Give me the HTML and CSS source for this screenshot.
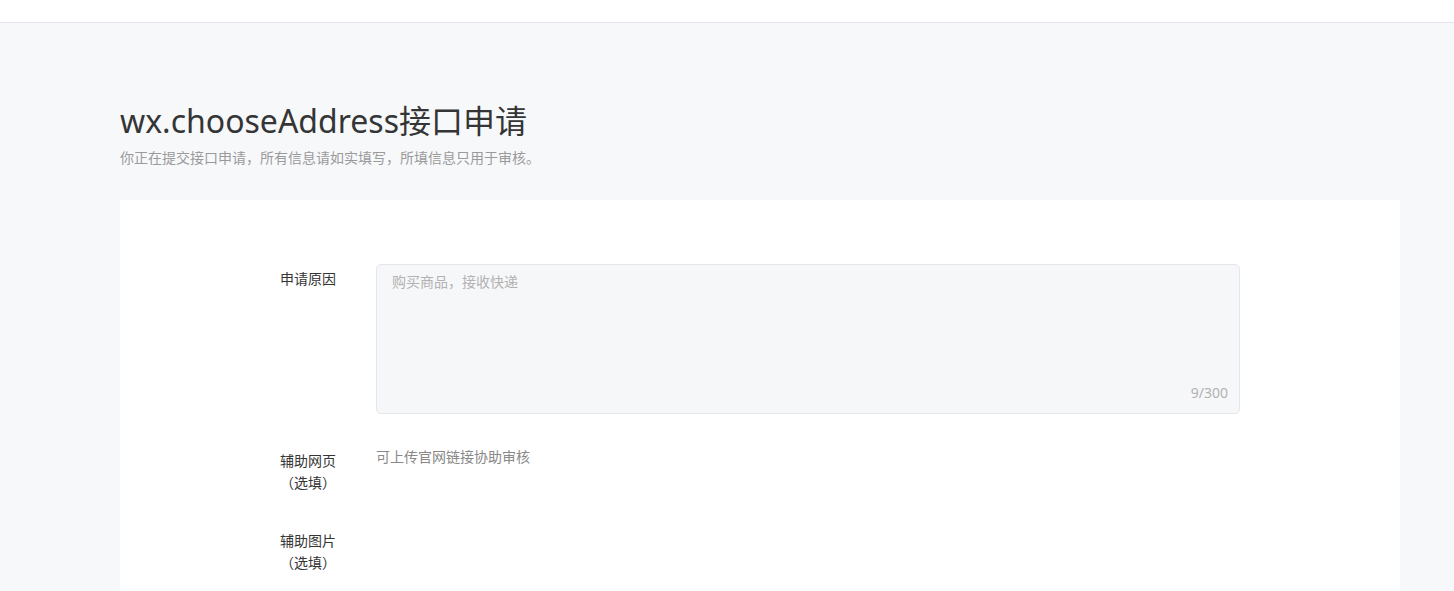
FILE: index.html
```html
<!DOCTYPE html>
<html>

	<head>
		<meta charset="UTF-8">
		<title>wx.chooseAddress接口申请</title>
		<link rel="stylesheet" href="styles.css">
	</head>

	<body>
		<header></header>
		<section class="main">
			<div class="page-head">
				<h1 class="title">wx.chooseAddress接口申请</h1>
				<p class="desc">你正在提交接口申请，所有信息请如实填写，所填信息只用于审核。</p>
			</div>
			<div class="card">
				<div class="row">
					<div class="label">申请原因</div>
					<div class="field">
						<div class="area">
							<textarea placeholder="购买商品，接收快递"></textarea>
							<span class="count">9/300</span>
						</div>
					</div>
				</div>
				<div class="row">
					<div class="label">辅助网页<br>（选填）</div>
					<div class="field">
						<div class="hint">可上传官网链接协助审核</div>
					</div>
				</div>
				<div class="row">
					<div class="label">辅助图片<br>（选填）</div>
					<div class="field"></div>
				</div>
			</div>
		</section>
	</body>

</html>
```

FILE: styles.css
```css
* {
	margin: 0;
	padding: 0;
	box-sizing: border-box;
}

body {
	background-color: #F7F8FA;
	font-family: "Noto Sans", "Noto Sans CJK SC", sans-serif;
	color: #353535;
	font-size: 14px;
}

header {
	height: 23px;
	background-color: #fff;
	border-bottom: 1px solid #E4E6EB;
}

.main {
	padding: 0 54px 0 120px;
}

.page-head {
	padding-top: 76px;
	height: 177px;
}

.title {
	font-size: 32px;
	font-weight: 400;
	line-height: 44px;
	margin-bottom: 5px;
	color: #353535;
}

.desc {
	font-size: 14px;
	line-height: 20px;
	color: #9A9A9A;
}

.card {
	background-color: #fff;
	padding: 64px 160px 40px 160px;
	min-height: 400px;
}

.row {
	display: flex;
	margin-bottom: 32px;
}

.label {
	width: 56px;
	margin-right: 40px;
	padding-top: 4px;
	line-height: 22px;
	text-align: center;
	color: #353535;
}

.field {
	flex: 1;
}

.area {
	position: relative;
	height: 150px;
	background-color: #F6F7F9;
	border: 1px solid #E4E6EB;
	border-radius: 5px;
}

textarea {
	display: block;
	width: 100%;
	height: 100%;
	padding: 6px 15px;
	border: none;
	outline: none;
	resize: none;
	background: transparent;
	font-family: inherit;
	font-size: 14px;
	line-height: 22px;
	color: #353535;
}

textarea::placeholder {
	color: #B2B2B2;
}

.count {
	position: absolute;
	right: 11px;
	bottom: 9px;
	line-height: 22px;
	color: #B2B2B2;
}

.hint {
	line-height: 22px;
	color: #888;
}
```
